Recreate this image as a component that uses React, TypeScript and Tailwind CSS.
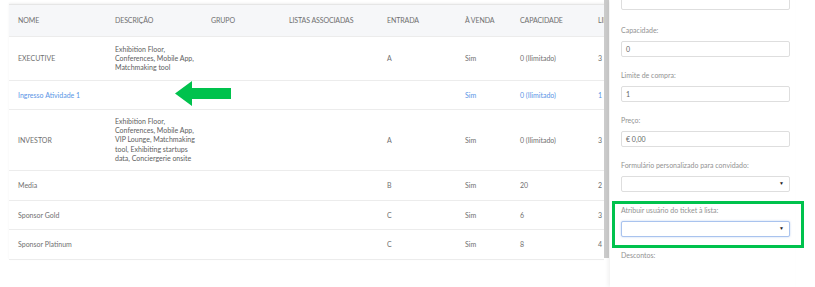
import React from "react";

const cols = "grid grid-cols-[97px_96px_78px_98px_78px_55px_78px_60px]";

type Row = {
  nome: string;
  desc?: string[];
  entrada: string;
  capacidade: string;
  limite: string;
  h: string;
  link?: boolean;
};

const rows: Row[] = [
  {
    nome: "EXECUTIVE",
    desc: ["Exhibition Floor,", "Conferences, Mobile App,", "Matchmaking tool"],
    entrada: "A",
    capacidade: "0 (Ilimitado)",
    limite: "3",
    h: "h-[44px]",
  },
  {
    nome: "Ingresso Atividade 1",
    entrada: "",
    capacidade: "0 (Ilimitado)",
    limite: "1",
    h: "h-[29px]",
    link: true,
  },
  {
    nome: "INVESTOR",
    desc: [
      "Exhibition Floor,",
      "Conferences, Mobile App,",
      "VIP Lounge, Matchmaking",
      "tool, Exhibiting startups",
      "data, Conciergerie onsite",
    ],
    entrada: "A",
    capacidade: "0 (Ilimitado)",
    limite: "3",
    h: "h-[61px]",
  },
  { nome: "Media", entrada: "B", capacidade: "20", limite: "2", h: "h-[30px]" },
  { nome: "Sponsor Gold", entrada: "C", capacidade: "6", limite: "3", h: "h-[29px]" },
  { nome: "Sponsor Platinum", entrada: "C", capacidade: "8", limite: "4", h: "h-[30px]" },
];

const headers = ["NOME", "DESCRIÇÃO", "GRUPO", "LISTAS ASSOCIADAS", "ENTRADA", "À VENDA", "CAPACIDADE", "LIMITE"];

function Field({ label, value, select, focus }: { label: string; value?: string; select?: boolean; focus?: boolean }) {
  return (
    <div className="mb-[13px]">
      <div className="h-[10px] leading-[10px] text-[7px] text-[#929292]">{label}</div>
      <div
        className={`mt-[6px] h-[16px] w-[169px] rounded-[2px] border bg-white flex items-center justify-between px-[4px] text-[7px] text-[#666] ${
          focus ? "border-[#a9c3ee] shadow-[0_0_2px_rgba(120,160,230,0.5)]" : "border-[#dedede]"
        }`}
      >
        <span>{value}</span>
        {select && <span className="text-[5px] text-[#222] mr-[1px]">▼</span>}
      </div>
    </div>
  );
}

export default function App() {
  return (
    <div
      className="relative w-[815px] h-[287px] bg-white overflow-hidden flex"
      style={{ fontFamily: "Lato, 'Open Sans', sans-serif" }}
    >
      {/* table */}
      <div className="w-[604px] h-full overflow-hidden pt-[4px] pl-[9px]">
        <div className="w-[640px] border-t border-[#e6e6e6] shadow-[0_-1px_2px_rgba(0,0,0,0.06)] text-[7px] text-[#707070]">
          <div className={`${cols} h-[32px] items-center bg-[#f6f7f9] border-b border-[#ececec]`}>
            {headers.map((h) => (
              <div key={h} className="pl-[9px] whitespace-nowrap tracking-[-0.1px]">
                {h}
              </div>
            ))}
          </div>
          {rows.map((r) => {
            const c = r.link ? "text-[#5a95e6]" : "";
            return (
              <div key={r.nome} className={`${cols} ${r.h} items-center border-b border-[#ececec]`}>
                <div className={`pl-[9px] whitespace-nowrap ${c}`}>{r.nome}</div>
                <div className="pl-[9px] leading-[9.3px] text-[#5e5e5e] whitespace-nowrap">
                  {r.desc?.map((d) => (
                    <div key={d}>{d}</div>
                  ))}
                </div>
                <div />
                <div />
                <div className="pl-[9px]">{r.entrada}</div>
                <div className={`pl-[9px] ${c}`}>Sim</div>
                <div className={`pl-[9px] whitespace-nowrap ${c}`}>{r.capacidade}</div>
                <div className={`pl-[9px] ${c}`}>{r.limite}</div>
              </div>
            );
          })}
        </div>
      </div>

      {/* scrollbar */}
      <div className="w-[5px] h-[258px] bg-[#cbcbcb]" />

      {/* side panel */}
      <div className="w-[185px] h-full bg-white pl-[11px] shadow-[-2px_0_4px_rgba(0,0,0,0.06)] ml-[1px]">
        <div className="-mt-[6px] mb-[15px] h-[16px] w-[169px] rounded-[2px] border border-[#dedede]" />
        <Field label="Capacidade:" value="0" />
        <Field label="Limite de compra:" value="1" />
        <Field label="Preço:" value="€ 0,00" />
        <Field label="Formulário personalizado para convidado:" select />
        <Field label="Atribuir usuário do ticket à lista:" select focus />
        <div className="h-[10px] leading-[10px] text-[7px] text-[#929292]">Descontos:</div>
      </div>

      {/* annotations */}
      <div className="absolute left-[612px] top-[201px] w-[192px] h-[47px] border-[3px] border-[#00c24d]" />
      <svg className="absolute left-[174px] top-[81px]" width="58" height="25" viewBox="0 0 58 25">
        <polygon points="1,12.5 18,0 18,7 57,7 57,18 18,18 18,25" fill="#00c24d" />
      </svg>
    </div>
  );
}
